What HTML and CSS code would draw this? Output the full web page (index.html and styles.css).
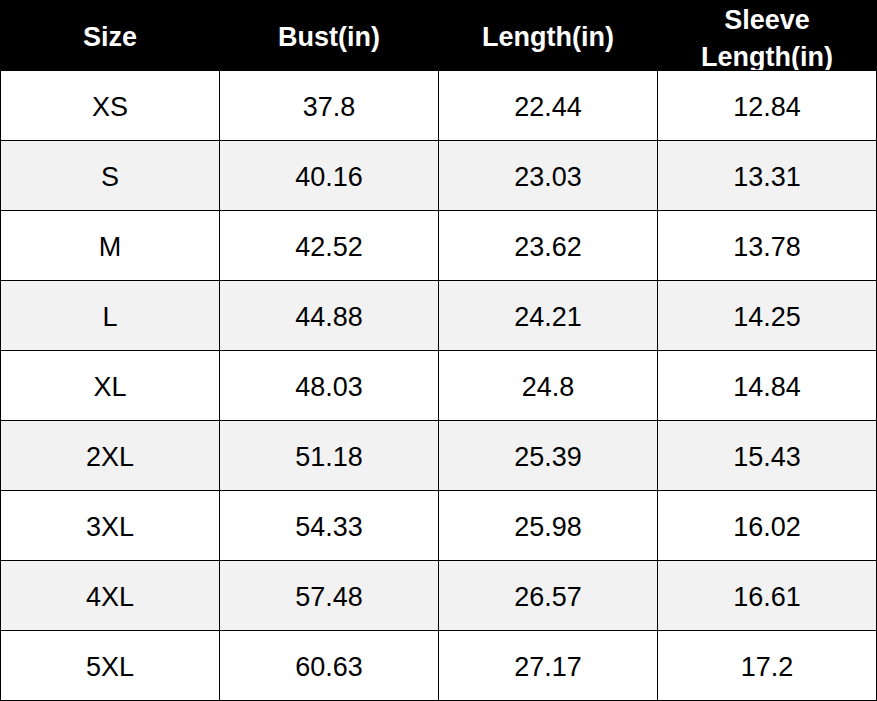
FILE: index.html
```html
<!DOCTYPE html>
<html>
<head>
<meta charset="utf-8">
<link rel="stylesheet" href="styles.css">
</head>
<body>
<div class="chart">
  <div class="row head">
    <div class="cell">Size</div>
    <div class="cell">Bust(in)</div>
    <div class="cell">Length(in)</div>
    <div class="cell two">Sleeve<br>Length(in)</div>
  </div>
  <div class="row"><div class="cell">XS</div><div class="cell">37.8</div><div class="cell">22.44</div><div class="cell">12.84</div></div>
  <div class="row alt"><div class="cell">S</div><div class="cell">40.16</div><div class="cell">23.03</div><div class="cell">13.31</div></div>
  <div class="row"><div class="cell">M</div><div class="cell">42.52</div><div class="cell">23.62</div><div class="cell">13.78</div></div>
  <div class="row alt"><div class="cell">L</div><div class="cell">44.88</div><div class="cell">24.21</div><div class="cell">14.25</div></div>
  <div class="row"><div class="cell">XL</div><div class="cell">48.03</div><div class="cell">24.8</div><div class="cell">14.84</div></div>
  <div class="row alt"><div class="cell">2XL</div><div class="cell">51.18</div><div class="cell">25.39</div><div class="cell">15.43</div></div>
  <div class="row"><div class="cell">3XL</div><div class="cell">54.33</div><div class="cell">25.98</div><div class="cell">16.02</div></div>
  <div class="row alt"><div class="cell">4XL</div><div class="cell">57.48</div><div class="cell">26.57</div><div class="cell">16.61</div></div>
  <div class="row"><div class="cell">5XL</div><div class="cell">60.63</div><div class="cell">27.17</div><div class="cell">17.2</div></div>
</div>
</body>
</html>
```
FILE: styles.css
```css
html, body {
  margin: 0;
  padding: 0;
  background: #ffffff;
}
.chart {
  width: 877px;
  font-family: "Liberation Sans", Arial, sans-serif;
  color: #000;
  border-bottom: 1px solid #000;
  box-sizing: border-box;
}
.row {
  display: grid;
  grid-template-columns: 220px 219px 219px 219px;
  background: #ffffff;
}
.row.alt {
  background: #f2f2f2;
}
.cell {
  border-top: 1px solid #000;
  border-right: 1px solid #000;
  display: flex;
  align-items: center;
  justify-content: center;
  text-align: center;
  font-size: 27px;
  padding-top: 3px;
  box-sizing: content-box;
  height: 66px;
}
.row .cell:first-child {
  border-left: 1px solid #000;
}
.row.head {
  background: #000;
}
.head .cell {
  border-top: none;
  height: 66px;
  padding-top: 4px;
  color: #fff;
  font-weight: bold;
  font-size: 27px;
  line-height: 37px;
}
.head .cell.two {
  padding-top: 7px;
  height: 63px;
}
```
